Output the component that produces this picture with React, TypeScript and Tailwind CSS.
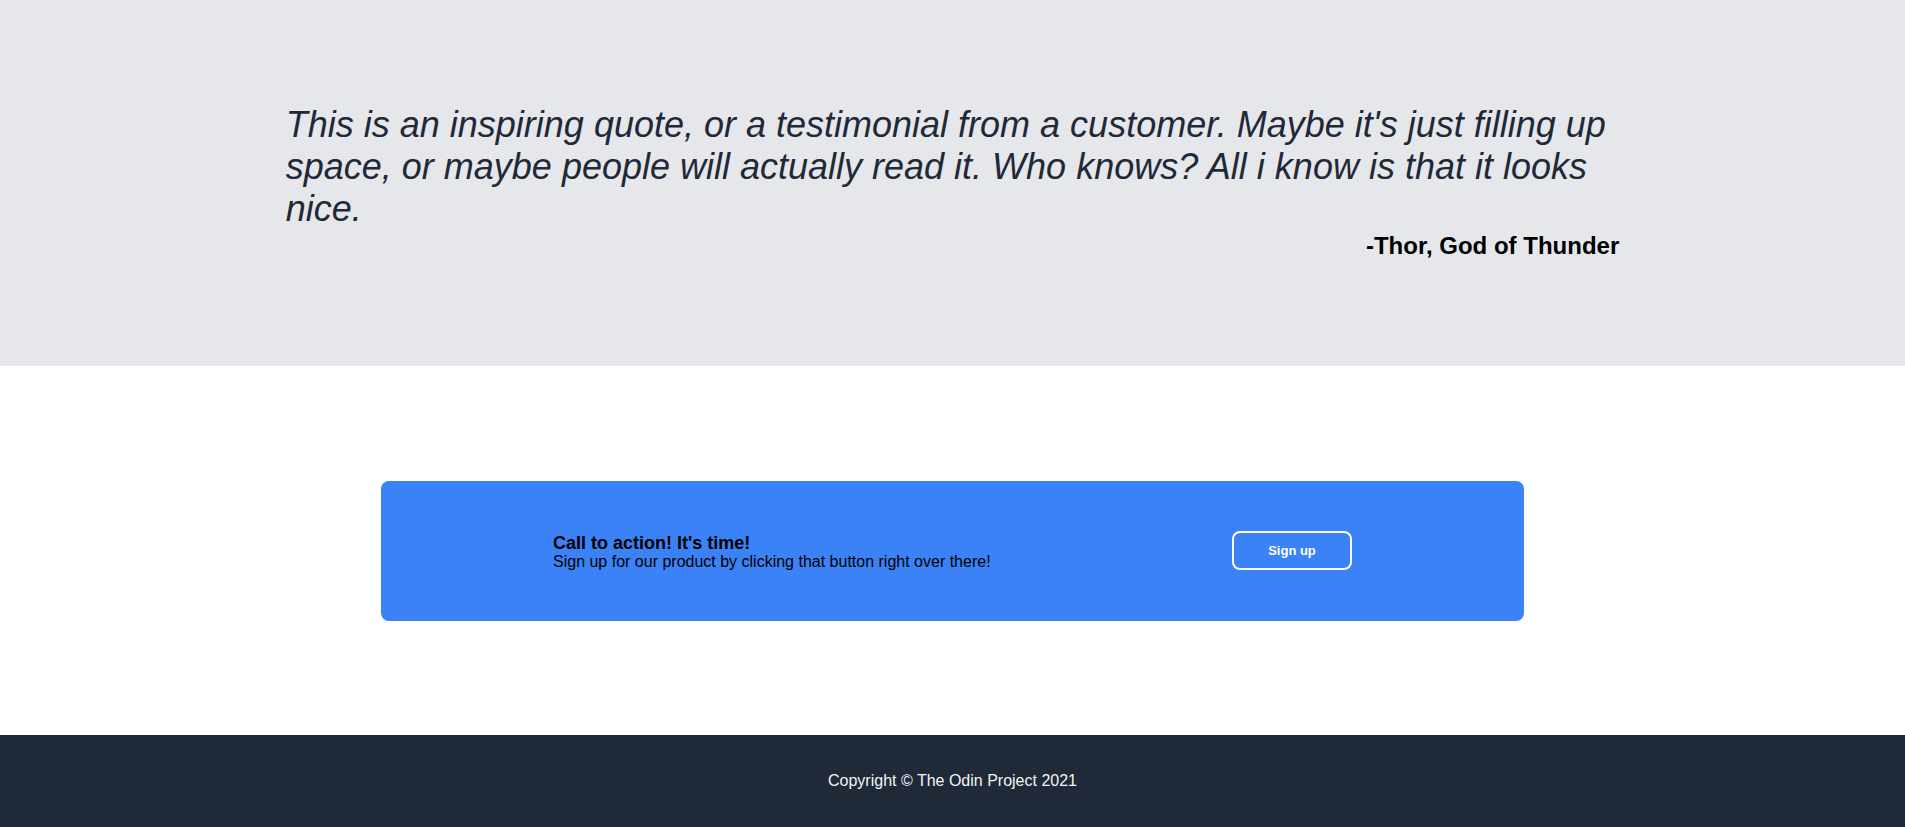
export default function App() {
  return (
    <div className="min-h-[827px] flex flex-col bg-white" style={{ fontFamily: '"Liberation Sans", Arial, sans-serif' }}>
      <section className="bg-[#e5e7eb] h-[366px] pt-[104px]">
        <div className="w-[70%] mx-auto flex flex-col">
          <p className="italic text-[36px] leading-[42px] text-[#1f2937]">
            This is an inspiring quote, or a testimonial from a customer. Maybe it's just filling up space, or maybe people will actually read it. Who knows? All i know is that it looks nice.
          </p>
          <p className="self-end font-bold text-[24px] leading-[28px] mt-[2px] text-black">-Thor, God of Thunder</p>
        </div>
      </section>
      <section className="h-[369px] flex items-center justify-center">
        <div className="w-[60%] h-[140px] bg-[#3b82f6] rounded-lg flex items-center justify-between px-[172px]">
          <div className="flex flex-col text-black pt-[2px]">
            <div className="font-bold text-[18px] leading-[20px]">Call to action! It's time!</div>
            <div className="text-[16px] leading-[18px]">Sign up for our product by clicking that button right over there!</div>
          </div>
          <button className="w-[120px] h-[39px] border-2 border-white rounded-lg text-white font-bold text-[13px]">
            Sign up
          </button>
        </div>
      </section>
      <footer className="bg-[#1f2937] h-[92px] flex items-center justify-center text-[#f3f4f6] text-[16px]">
        Copyright © The Odin Project 2021
      </footer>
    </div>
  );
}
